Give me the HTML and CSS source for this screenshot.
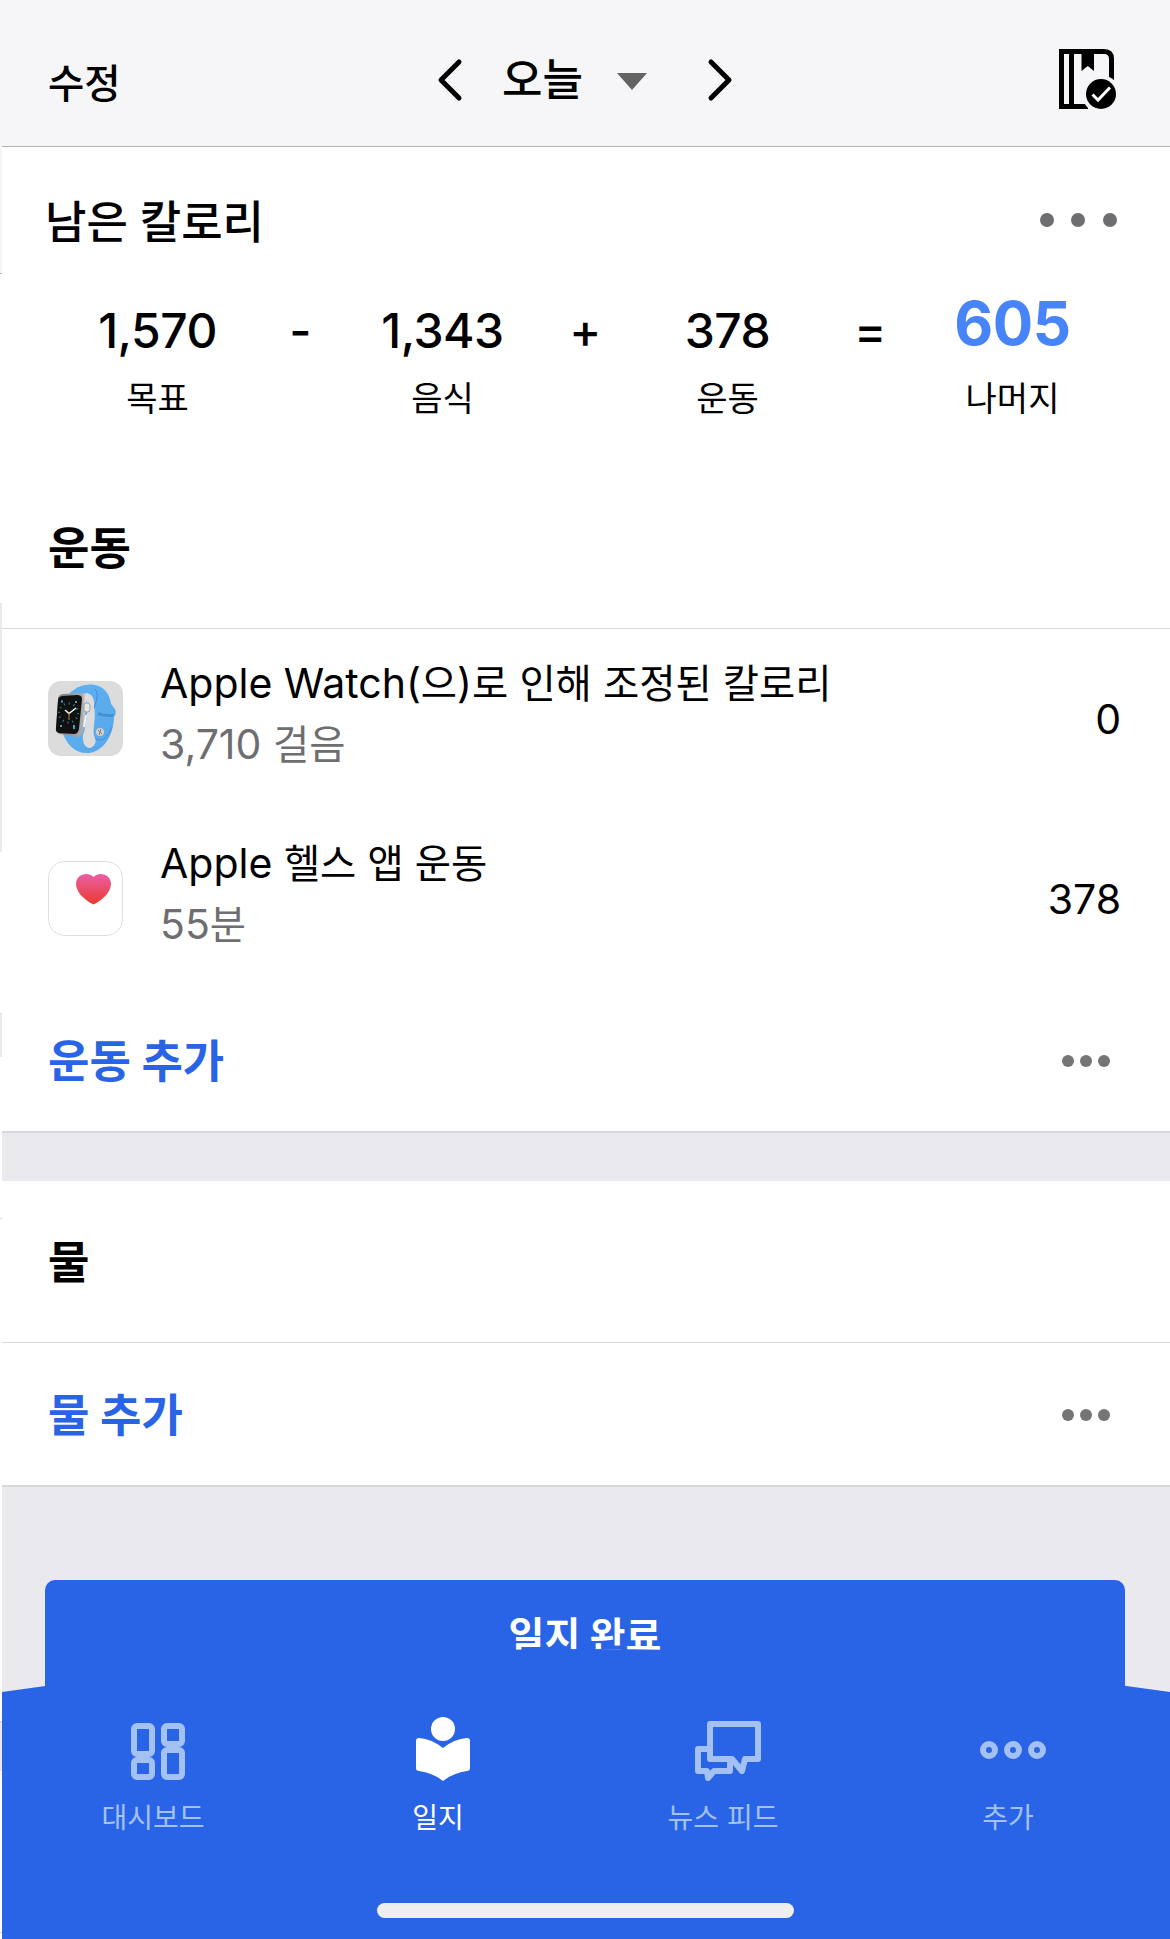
FILE: index.html
```
<!DOCTYPE html>
<html lang="ko">
<head>
  <meta charset="utf-8">
  <title>일지</title>
  <link rel="stylesheet" href="styles.css">
</head>
<body>
<div class="app">
  <header class="header">
    <div class="edit">수정</div>
    <div class="day-picker">
      <svg class="chevron" width="26" height="44" viewBox="0 0 26 44"><path d="M22 4 4 22 22 40" /></svg>
      <span class="day">오늘</span>
      <svg class="caret" width="30" height="17" viewBox="0 0 30 17"><path d="M0 0H30L15 17Z" /></svg>
      <svg class="chevron" width="26" height="44" viewBox="0 0 26 44"><path d="M4 4 22 22 4 40" /></svg>
    </div>
    <svg class="book" width="60" height="62" viewBox="0 0 60 62">
      <path class="line" d="M3.5 3.5H46Q53.500 3.500 53.500 11V32M3.500 1V61M1 58.500H30M13.500 3V59" />
      <path d="M23.500 1H36V23L29.800 18L23.500 23Z" />
      <circle class="gap" cx="43" cy="46" r="19" />
      <circle cx="43" cy="46" r="15" />
      <path class="check" d="M34.500 46.500 40 52 52 39.500" />
    </svg>
  </header>

  <section class="summary">
    <div class="summary-head">
      <h1>남은 칼로리</h1>
      <svg width="78" height="14" viewBox="0 0 78 14"><circle cx="7" cy="7" r="7" /><circle cx="38" cy="7" r="7" /><circle cx="70" cy="7" r="7" /></svg>
    </div>
    <div class="equation">
      <div class="item"><div class="number">1,570</div><div class="label">목표</div></div>
      <div class="operator">-</div>
      <div class="item"><div class="number">1,343</div><div class="label">음식</div></div>
      <div class="operator">+</div>
      <div class="item"><div class="number">378</div><div class="label">운동</div></div>
      <div class="operator">=</div>
      <div class="item"><div class="number remaining">605</div><div class="label">나머지</div></div>
    </div>
  </section>

  <section class="card">
    <h2 class="exercise-title">운동</h2>
    <div class="entry">
      <svg class="entry-icon" width="75" height="75" viewBox="0 0 75 75">
        <defs>
          <linearGradient id="band" x1="0" y1="0" x2="1" y2="1">
            <stop offset="0" stop-color="#5fb1f2" />
            <stop offset="1" stop-color="#57a8ec" />
          </linearGradient>
          <linearGradient id="steel" x1="0" y1="0" x2="1" y2="0">
            <stop offset="0" stop-color="#7d7f82" />
            <stop offset=".85" stop-color="#a9abad" />
            <stop offset="1" stop-color="#f2f2f2" />
          </linearGradient>
        </defs>
        <rect width="75" height="75" rx="13" fill="#dcdcdc" />
        <!-- strap behind the case, then the case and dial -->
        <path fill="url(#band)" fill-rule="evenodd" d="M19 16C25 6 38 2 47 4C57 6 62 14 63 23L67 28Q69 32 66 36C66 52 57 70 41 72C28 73 19 65 14 50ZM37 12C41 16 39 45 35 54C34 61 37 67 42 67C46 66 49 61 47 57C43 51 49 36 46 26C47 18 44 12 37 12Z" />
        <path fill="#438fd2" d="M50 31Q57 34 66 33L65 36Q56 36 50 34Z" />
        <path fill="none" stroke="#438fd2" d="M46 27Q52 12 47 8M47 57Q56 65 64 46" />
        <path fill="url(#steel)" d="M14 13 33 12Q39 12 39 17L35 50Q34 56 29 56L12 53Q8 52 8 47L10 19Q10 14 14 13Z" />
        <path fill="#111" d="M14 15 29 14Q34 14 34 18L31 48Q30 53 26 53L11 52Q7 51 8 47L10 19Q10 16 14 15Z" />
        <circle cx="20.500" cy="32" r="9.500" fill="none" stroke="#2d91ad" stroke-width="2" stroke-dasharray="1 3.970" />
        <path fill="none" stroke="#fff" stroke-width="1.400" d="M17 29 21 32.500 28 27" />
        <path fill="none" stroke="#b58b42" d="M21 32V39" />
        <path fill="none" stroke="#42a5c0" stroke-width="2" d="M13 20.500H15M28 20V22M12 45H14M26 44V48" />
        <rect x="36" y="22" width="6" height="9" rx="2.500" fill="#e8e8e8" stroke="#9b9b9b" />
        <path stroke="#f5f5f5" stroke-width="2" d="M38 34 36 46" />
        <circle cx="52" cy="51" r="4" fill="#d5d0ca" />
        <path stroke="#827d79" d="M50 49 54 53M53 48 51 54" />
      </svg>
      <div class="entry-text">
        <div class="title">Apple Watch(<span class="ko">으</span>)<span class="ko">로 인해 조정된 칼로리</span></div>
        <div class="detail">3,710 <span class="ko">걸음</span></div>
      </div>
      <div class="value">0</div>
    </div>
    <div class="entry">
      <svg class="entry-icon" width="75" height="75" viewBox="0 0 75 75">
        <defs>
          <linearGradient id="heart" x1="0" y1="0" x2="0" y2="1">
            <stop offset="0" stop-color="#eb5fa9" />
            <stop offset="1" stop-color="#e93b2b" />
          </linearGradient>
        </defs>
        <rect x=".5" y=".5" width="74" height="74" rx="16" fill="#fff" stroke="#dedede" />
        <path fill="url(#heart)" d="M45.500 43.500C38 40 28 32 28 23C28 13 40 10 45.500 16C51 10 63 13 63 23C63 32 53 40 45.500 43.500Z" />
      </svg>
      <div class="entry-text">
        <div class="title">Apple <span class="ko">헬스 앱 운동</span></div>
        <div class="detail">55<span class="ko">분</span></div>
      </div>
      <div class="value">378</div>
    </div>
    <div class="add-row">
      <span>운동 추가</span>
      <svg width="48" height="12" viewBox="0 0 48 12"><circle cx="6" cy="6" r="6" /><circle cx="24" cy="6" r="6" /><circle cx="42" cy="6" r="6" /></svg>
    </div>
  </section>

  <section class="card water">
    <h2 class="water-title">물</h2>
    <div class="add-row">
      <span>물 추가</span>
      <svg width="48" height="12" viewBox="0 0 48 12"><circle cx="6" cy="6" r="6" /><circle cx="24" cy="6" r="6" /><circle cx="42" cy="6" r="6" /></svg>
    </div>
  </section>

  <div class="finish">일지 완료</div>

  <nav class="tabs">
    <svg class="tabs-arc" width="1168" height="44" viewBox="0 0 1168 44"><path d="M0 43Q584 -43 1168 43V44H0Z" /></svg>
    <div class="tabs-row">
      <div class="tab">
        <svg width="72" height="72" viewBox="0 0 72 72">
          <g class="line">
            <rect x="12" y="10" width="18" height="28" rx="3" />
            <rect x="42" y="10" width="18" height="18" rx="3" />
            <rect x="12" y="44" width="18" height="17" rx="3" />
            <rect x="42" y="34" width="18" height="27" rx="3" />
          </g>
        </svg>
        <div class="tab-label">대시보드</div>
      </div>
      <div class="tab active">
        <svg width="72" height="72" viewBox="0 0 72 72">
          <circle cx="36" cy="13" r="12" />
          <path d="M9 25Q9 22 12 22Q25 23 36 32Q47 23 60 22Q63 22 63 25V52Q63 55 60 55Q46 57 36 65Q26 57 12 55Q9 55 9 52Z" />
        </svg>
        <div class="tab-label">일지</div>
      </div>
      <div class="tab">
        <svg width="72" height="72" viewBox="0 0 72 72">
          <path class="line" d="M18 8H66V43H53L50 55L40 43H18ZM18 33H6V55H15L16 62L22 55H38V43" />
        </svg>
        <div class="tab-label">뉴스 피드</div>
      </div>
      <div class="tab">
        <svg width="72" height="72" viewBox="0 0 72 72">
          <g class="line"><circle cx="12" cy="34" r="6" /><circle cx="36" cy="34" r="6" /><circle cx="60" cy="34" r="6" /></g>
        </svg>
        <div class="tab-label">추가</div>
      </div>
    </div>
    <div class="home-bar"></div>
  </nav>
</div>
</body>
</html>
```
FILE: styles.css
```
* {
  box-sizing: border-box;
}

html, body {
  margin: 0;
  padding: 0;
}

/* the 2px gutter on the left shows slices of the previous page */
body {
  width: 1170px;
  height: 1939px;
  overflow: hidden;
  padding-left: 2px;
  font-family: Inter, "Noto Sans CJK KR", sans-serif;
  color: #000;
  background: linear-gradient(
    #f6f6f8 273px, #b2b2b2 273px 274px, #fff 274px 603px, #eae9ee 603px 852px,
    #fff 852px 1013px, #d8d8da 1013px 1014px, #eae9ee 1014px 1057px,
    #fff 1057px 1218px, #d8d8da 1218px 1219px, #fff 1219px 1721px,
    #d8d8da 1721px 1723px, #eae9ee 1723px 1771px, #fff 1771px 1932px,
    #d8d8da 1932px 1933px, #fff 1933px);
}

h1, h2 {
  margin: 0;
}

svg {
  display: block;
  flex: none;
}

.app {
  height: 1939px;
  background: #eae9ee;
}

.header {
  display: grid;
  grid-template-columns: 1fr auto 1fr;
  align-items: center;
  height: 147px;
  padding: 14px 52px 0 46px;
  background: #f6f6f8;
  border-bottom: 1px solid #b2b2b2;
}

.edit {
  font-size: 39.5px;
  font-weight: 500;
}

.day-picker {
  display: flex;
  align-items: center;
  margin-left: 4px;
}

.day {
  margin: 0 34px 0 39px;
  font-size: 44px;
  font-weight: 500;
  line-height: 60px;
}

.chevron {
  fill: none;
  stroke: #000;
  stroke-width: 5;
  stroke-linecap: round;
  stroke-linejoin: round;
}

.caret {
  margin: 2px 60px 0 0;
  fill: #636363;
}

.book {
  justify-self: end;
  margin-bottom: 2px;
}

.book .line {
  fill: none;
  stroke: #000;
  stroke-width: 5;
}

.book .gap {
  fill: #f6f6f8;
}

.book .check {
  fill: none;
  stroke: #fff;
  stroke-width: 3;
}

.summary {
  height: 338px;
  background: #fff;
}

.summary-head {
  display: flex;
  align-items: center;
  justify-content: space-between;
  height: 145px;
  padding: 0 52px 0 43px;
  fill: #6e6e70;
}

.summary-head h1 {
  font-size: 45px;
  font-weight: 500;
}

.equation {
  display: grid;
  grid-template-columns: repeat(7, 142.5px);
  justify-content: center;
  padding-right: 2px;
  text-align: center;
}

.number, .operator {
  height: 79px;
  font-size: 48px;
  font-weight: 500;
  line-height: 77px;
  letter-spacing: -.5px;
  white-space: nowrap;
}

.number.remaining {
  font-size: 60px;
  font-weight: 700;
  line-height: 62px;
  letter-spacing: -.5px;
  color: #4784f9;
}

.label {
  font-size: 34px;
  line-height: 56px;
}

.card {
  background: #fff;
}

.card h2 {
  padding-left: 46px;
  font-size: 45px;
  font-weight: 700;
  border-bottom: 1px solid #d8d8da;
}

.exercise-title {
  height: 144px;
  line-height: 128px;
}

.entry {
  display: flex;
  align-items: center;
  height: 180px;
  padding: 0 49px 0 46px;
}

.entry-icon {
  margin: 0 37px 2px 0;
}

.entry-text {
  flex: 1;
  padding-bottom: 10px;
  line-height: 60px;
}

.title, .detail, .value {
  font-size: 41px;
}

.detail {
  color: #6e6e70;
}

.ko {
  font-size: 39.4px;
}

.add-row {
  display: flex;
  align-items: center;
  justify-content: space-between;
  height: 144px;
  padding: 2px 60px 0 46px;
  font-size: 45px;
  font-weight: 700;
  color: #2964e6;
  fill: #757575;
  border-bottom: 2px solid #d8d8da;
}

.add-row span {
  padding-bottom: 5px;
}

.water {
  margin-top: 48px;
}

.water-title {
  height: 162px;
  line-height: 163px;
}

.finish {
  height: 110px;
  margin: 93px 45px 0 43px;
  border-radius: 10px 10px 0 0;
  font-size: 39px;
  font-weight: 700;
  line-height: 112px;
  text-align: center;
  color: #fff;
  background: #2964e6;
}

/* slides up over the lower half of the finish button */
.tabs {
  position: relative;
  margin-top: -41px;
}

.tabs-arc {
  fill: #2964e6;
}

.tabs-row {
  display: flex;
  height: 162px;
  padding: 23px 15px 0 13px;
  background: #2964e6;
}

.tab {
  flex: 1;
  color: #a3c1f3;
  fill: #a3c1f3;
}

.tab svg {
  margin: 0 auto;
}

.tab .line {
  fill: none;
  stroke: #a3c1f3;
  stroke-width: 6;
  stroke-linejoin: round;
}

.tab.active {
  color: #fff;
  fill: #fff;
}

.tab-label {
  margin-right: 9px;
  font-size: 28px;
  line-height: 60px;
  text-align: center;
}

.home-bar {
  height: 84px;
  padding: 48px 0 0 375px;
  background: #2964e6;
}

.home-bar::before {
  content: "";
  display: block;
  width: 417px;
  height: 15px;
  border-radius: 8px;
  background: #eee;
}
```
